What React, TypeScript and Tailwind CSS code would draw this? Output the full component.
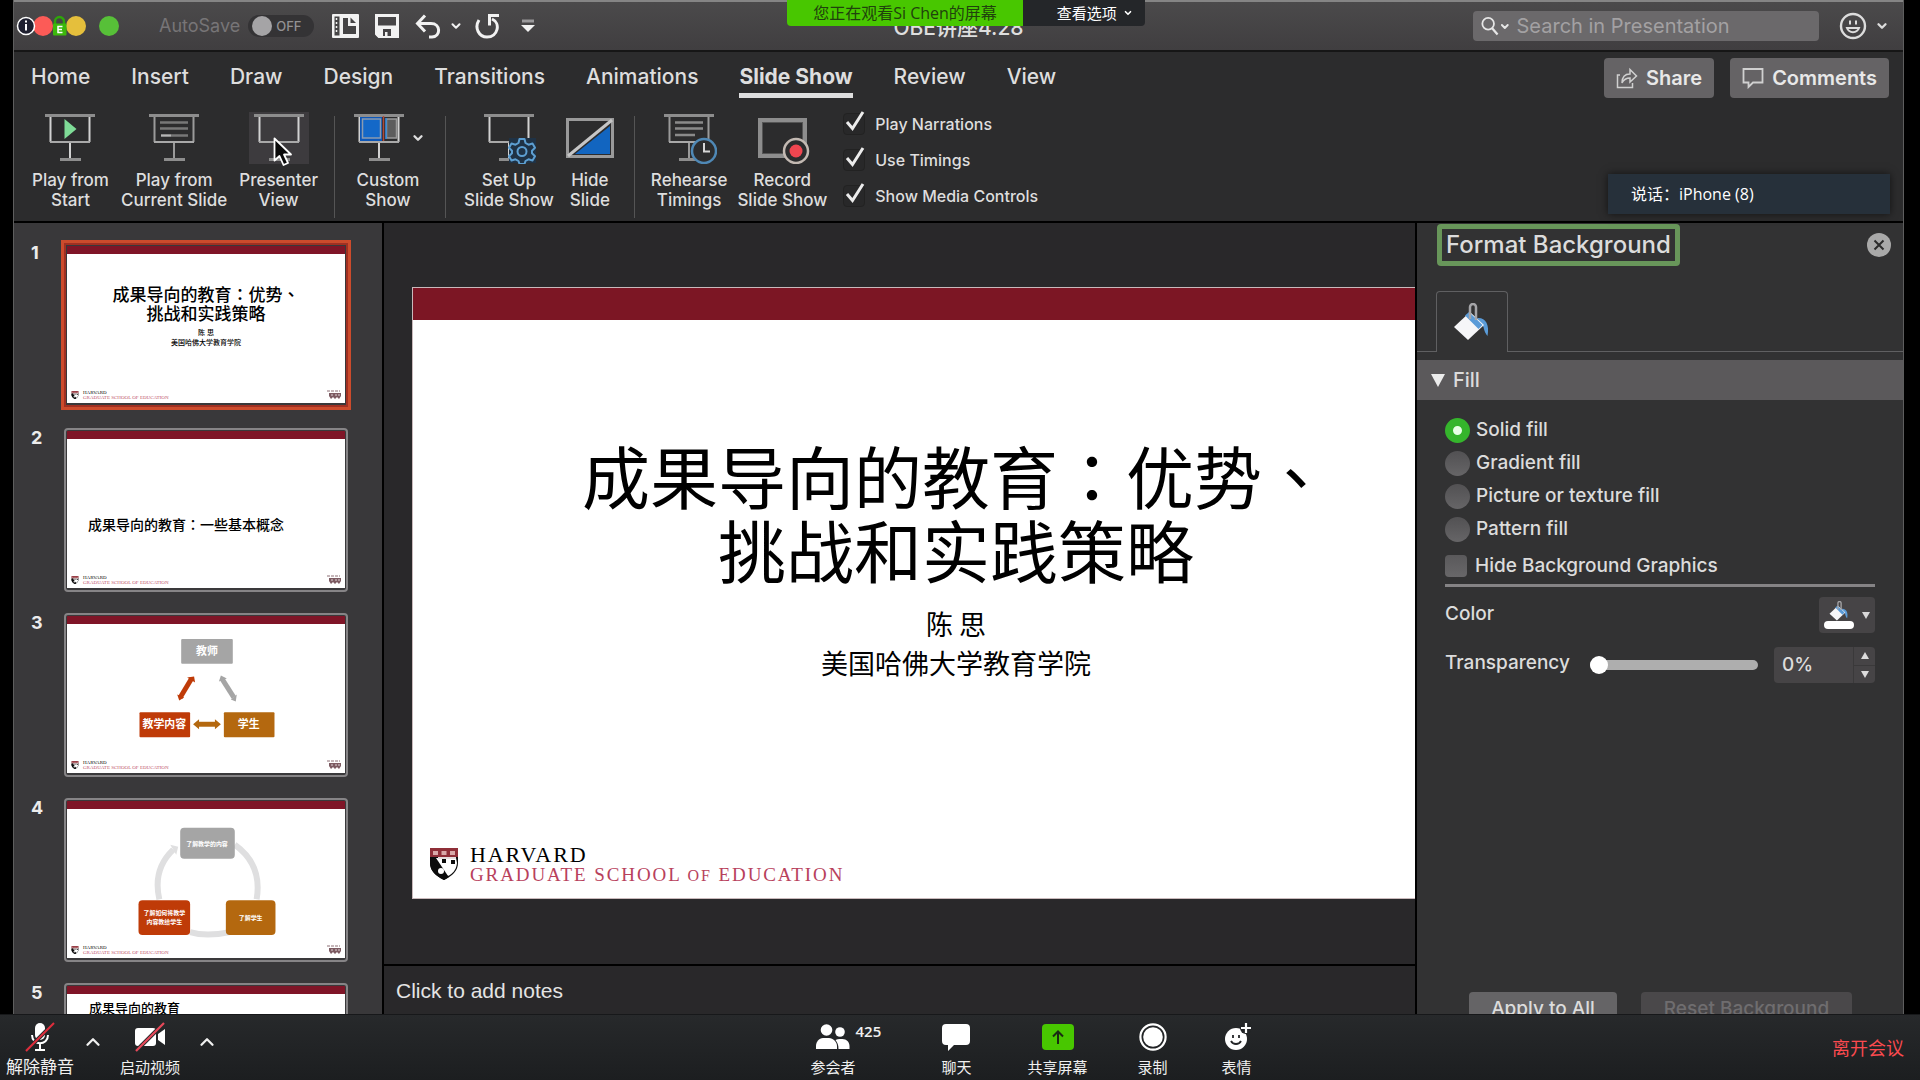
import { useState, type ReactNode } from "react";
import { ChevronDown, ChevronUp } from "lucide-react";
import { clsx } from "clsx";

const ribbonTabs = [
  "Home",
  "Insert",
  "Draw",
  "Design",
  "Transitions",
  "Animations",
  "Slide Show",
  "Review",
  "View",
];

const fillOptions = [
  "Solid fill",
  "Gradient fill",
  "Picture or texture fill",
  "Pattern fill",
];

const playbackOptions = ["Play Narrations", "Use Timings", "Show Media Controls"];

/* ---------- icons ---------- */

function Screen({ children, bright = true }: { children?: ReactNode; bright?: boolean }) {
  const line = bright ? "#d2d2d2" : "#9a9a9a";
  return (
    <svg width="56" height="52" viewBox="0 0 56 52" fill="none" aria-hidden="true">
      <path d="M8.5 4v26M47.5 4v26M28 30v17" stroke={line} strokeWidth="2" />
      <path d="M8 30h40" stroke="#a9a9a9" strokeWidth="2" />
      <path d="M3 3.5h50M18 47.5h21" stroke="#8d8d8d" strokeWidth="3" />
      {children}
    </svg>
  );
}

const PlayStartIcon = () => (
  <Screen>
    <path d="M22.5 7v20l12-10z" fill="#7fdc97" />
  </Screen>
);

const PlayCurrentIcon = () => (
  <Screen bright={false}>
    <path d="M14 10.5h28M14 16.5h28M25 23.5h17" stroke="#777" strokeWidth="2.4" />
    <path d="M15 23.5h10" stroke="#b5b5b5" strokeWidth="2.4" />
  </Screen>
);

const CustomShowIcon = () => (
  <Screen>
    <rect x="9" y="5" width="22" height="24" fill="#0d57b8" />
    <rect x="11.5" y="7" width="18" height="19" fill="#1468c8" stroke="#8a9bb0" strokeWidth="1.5" />
    <path d="M32.5 4v25" stroke="#b04a3c" strokeWidth="1.5" />
    <rect x="35.5" y="7" width="10" height="19" fill="#5d5d5d" stroke="#9a9a9a" strokeWidth="1.5" />
    <path d="M35 6v21" stroke="#2f8ae0" strokeWidth="1.5" />
  </Screen>
);

const SetUpIcon = () => (
  <Screen>
    <path d="M28 26h27v25H28z" fill="#1f3245" />
    <g stroke="#5d9fd2" strokeWidth="2">
      <path
        d="M38.5 27h5l1 4 3 1.7 4-1.2 2.5 4.3-3 2.9v2.6l3 2.9-2.5 4.3-4-1.2-3 1.7-1 3h-5l-1-3-3-1.7-4 1.2-2.5-4.3 3-2.9v-2.6l-3-2.9 2.5-4.3 4 1.2 3-1.7z"
        fill="#1f3245"
        strokeLinejoin="round"
      />
      <circle cx="41" cy="39.5" r="4.5" />
    </g>
  </Screen>
);

const HideSlideIcon = () => (
  <svg width="56" height="52" viewBox="0 0 56 52" fill="none" aria-hidden="true">
    <rect x="5.5" y="7.5" width="45" height="37" stroke="#9a9a9a" strokeWidth="3" />
    <path d="M48 14v28H13z" fill="#1265c0" />
    <path d="M6 44L50 8" stroke="#c6c6c6" strokeWidth="3" />
  </svg>
);

const RehearseIcon = () => (
  <Screen bright={false}>
    <path d="M14 10.5h28M14 16.5h28M14 23h20" stroke="#8a8a8a" strokeWidth="2.4" />
    <circle cx="43" cy="39" r="12" fill="#2c2c2d" stroke="#4f88b5" strokeWidth="2.5" />
    <path d="M43 31v8.5h6" stroke="#d6d6d6" strokeWidth="2" />
  </Screen>
);

const RecordIcon = () => (
  <svg width="56" height="52" viewBox="0 0 56 52" fill="none" aria-hidden="true">
    <rect x="6" y="8" width="45" height="36" stroke="#8d8d8d" strokeWidth="4" />
    <rect x="8.5" y="10.5" width="40" height="31" stroke="#555" strokeWidth="1" />
    <circle cx="42" cy="39" r="12" fill="#2c2c2d" stroke="#c3b9b2" strokeWidth="2.5" />
    <circle cx="42" cy="39" r="6.5" fill="#f04650" />
  </svg>
);

const PointerIcon = ({ className }: { className?: string }) => (
  <svg width="20" height="30" viewBox="0 0 20 30" className={className} aria-hidden="true">
    <path
      d="M1.5 1.5v22l5-4.5 4 9 4.5-2-4-8.5h7z"
      fill="#0a0a0a"
      stroke="#fff"
      strokeWidth="1.8"
      strokeLinejoin="round"
    />
  </svg>
);

const BucketIcon = ({ size = 38 }: { size?: number }) => (
  <svg width={size} height={size} viewBox="0 0 38 38" fill="none" aria-hidden="true">
    <path d="M24 15c8-1 13 6 10.5 18-1.5-2-3-4-4-9z" fill="#5a9bd8" />
    <path d="M17 9L31 22 15 37 1 24z" fill="#f6f6f8" />
    <path d="M12 12.5l4-3.5 13.5 13-4 4z" fill="#5a9bd8" />
    <path d="M17 16V4a3 3 0 0 1 6 0v13" stroke="#a5a5a8" strokeWidth="2.5" />
  </svg>
);

const ShieldIcon = ({ className }: { className?: string }) => (
  <svg viewBox="0 0 28 32" className={className} aria-hidden="true">
    <path d="M0 9h28v6c0 8-6 13-14 17C6 28 0 23 0 15z" fill="#0c0c0c" />
    <path d="M6 10h20l1 5c-1 8-5 11-9 13z" fill="#fff" />
    <path d="M0 12l19 17-5 3C6 28 0 23 0 15z" fill="#0c0c0c" />
    <circle cx="11" cy="23" r="3" fill="#fff" />
    <path d="M12 11h4v4h-4zM21 12h4v4h-4z" fill="#0c0c0c" />
    <path d="M0 0h28v9H0z" fill="#8f2f38" />
    <path d="M3 3h5v4H3zM11.5 3h5v4h-5zM20 3h5v4h-5z" fill="#d9a8a8" />
    <path d="M8 9h18v2H8z" fill="#e5dede" />
  </svg>
);

const CrestMark = () => (
  <svg width="14" height="10" viewBox="0 0 14 10" aria-hidden="true">
    <path d="M0 1h13" stroke="#8c6f75" strokeWidth="1" strokeDasharray="3 1" />
    <path d="M2 3h12v3l-2 3-2-2-2 2-2-2-2 2-2-3z" fill="#7d5b62" />
    <path d="M5 4v2M9 4v2M12 4v2" stroke="#e0d4d6" strokeWidth="1" />
  </svg>
);

/* ---------- slides ---------- */

const Punct = ({ children }: { children: string }) => (
  <span className="font-['Noto_Sans_CJK_TC',sans-serif]">{children}</span>
);

function Thumbnail({
  number,
  selected,
  children,
}: {
  number: number;
  selected?: boolean;
  children: ReactNode;
}) {
  return (
    <li className="flex items-start">
      <span className="w-[50px] shrink-0 pl-[17px] text-lg leading-5 font-bold text-[#ececec]">
        {number}
      </span>
      <button
        type="button"
        aria-label={`Slide ${number}`}
        className={clsx(
          "flex h-[164px] w-[284px] shrink-0 border-2 px-px pt-px pb-0.5",
          selected
            ? "border-[#a03022] outline-3 outline-[#cc4b2c]"
            : "rounded-sm border-[#868486] bg-[#3a393b]",
        )}
      >
        <span className="flex h-full w-full flex-col border-t-8 border-[#7f1527] bg-white text-black">
          <span className="flex min-h-0 flex-1 flex-col">{children}</span>
          <span className="flex h-4 shrink-0 items-center gap-1 px-1">
            <ShieldIcon className="h-2 w-2" />
            <span className="flex flex-1 flex-col text-left font-['Liberation_Serif',serif] text-[5px] leading-[5px]">
              <span>HARVARD</span>
              <span className="text-[#c0526a]">GRADUATE SCHOOL OF EDUCATION</span>
            </span>
            <CrestMark />
          </span>
        </span>
      </button>
    </li>
  );
}

function SlideList() {
  return (
    <aside
      aria-label="Slides"
      className="w-[370px] shrink-0 overflow-hidden border-r-2 border-black bg-[#39383a] pt-5"
    >
      <ol className="flex flex-col gap-[21px]">
        <Thumbnail number={1} selected>
          <span className="flex flex-col pt-[30px] text-center">
            <span className="text-[17px] leading-[19px] font-medium">
              成果导向的教育<Punct>：</Punct>优势<Punct>、</Punct>
              <br />
              挑战和实践策略
            </span>
            <span className="pt-1 text-[7px] leading-[10px] font-medium">
              陈 思
              <br />
              美国哈佛大学教育学院
            </span>
          </span>
        </Thumbnail>
        <Thumbnail number={2}>
          <span className="pt-[75px] pl-[21px] text-left text-sm leading-5 font-medium">
            成果导向的教育<Punct>：</Punct>一些基本概念
          </span>
        </Thumbnail>
        <Thumbnail number={3}>
          <svg viewBox="0 0 278 134" className="w-full font-['Noto_Sans_CJK_SC',sans-serif]">
            <g fontSize="11" fontWeight="700" fill="#fff" textAnchor="middle">
              <rect x="114" y="15" width="52" height="25" rx="1" fill="#a5a5a5" />
              <text x="140" y="31">教师</text>
              <rect x="72" y="89" width="51" height="25" rx="1" fill="#bf3b08" />
              <text x="97" y="105">教学内容</text>
              <rect x="157" y="89" width="51" height="25" rx="1" fill="#b4680f" />
              <text x="182" y="105">学生</text>
            </g>
            <path d="M124.5 55L113 74" stroke="#bf3b08" strokeWidth="5" />
            <path d="M120 54l7-1 1 6zM110 71l2 6 5-3z" fill="#bf3b08" />
            <path d="M155 55l12 19" stroke="#a5a5a5" strokeWidth="5" />
            <path d="M152 58l2-6 6 3zM164 76l6-5-1 7z" fill="#a5a5a5" />
            <path d="M130 101h19" stroke="#b4680f" strokeWidth="5" />
            <path d="M132 96v10l-6-5zM148 96v10l6-5z" fill="#b4680f" />
          </svg>
        </Thumbnail>
        <Thumbnail number={4}>
          <svg viewBox="0 0 278 134" className="w-full font-['Noto_Sans_CJK_SC',sans-serif]">
            <g stroke="#dfdfe0" strokeWidth="6" fill="none">
              <path d="M168 36q28 20 22 55M92 91q-7-30 14-50M123 124q16 5 40 0" />
            </g>
            <path d="M103 36l8 2-2 8z" fill="#dfdfe0" />
            <g fontSize="6" fontWeight="700" fill="#fff" textAnchor="middle">
              <rect x="113" y="19" width="55" height="31" rx="4" fill="#a5a5a5" />
              <text x="140" y="37">了解教学的内容</text>
              <rect x="71" y="92" width="52" height="35" rx="4" fill="#bf3b08" />
              <text x="97" y="107">了解如何将教学</text>
              <text x="97" y="116">内容教给学生</text>
              <rect x="159" y="92" width="50" height="35" rx="4" fill="#b4680f" />
              <text x="184" y="112">了解学生</text>
            </g>
          </svg>
        </Thumbnail>
        <Thumbnail number={5}>
          <span className="pt-1 pl-[22px] text-left text-[13px] leading-5 font-medium">
            成果导向的教育
          </span>
        </Thumbnail>
      </ol>
    </aside>
  );
}

function SlideStage() {
  return (
    <main className="flex min-w-0 flex-1 flex-col bg-[#29282a]">
      <div className="min-h-0 flex-1 overflow-hidden pt-16 pl-7">
        <article className="flex aspect-video w-[1088px] flex-col border border-[#c9b9bb] bg-white font-['Noto_Sans_CJK_SC',sans-serif] text-black">
          <div className="h-8 shrink-0 bg-[#7c1624]" />
          <div className="flex-1 pt-[118px] text-center">
            <h1 className="text-[68px] leading-[74px]">
              成果导向的教育<Punct>：</Punct>优势<Punct>、</Punct>
              <br />
              挑战和实践策略
            </h1>
            <p className="pt-[18px] text-[27px] leading-[39px]">
              陈 思
              <br />
              美国哈佛大学教育学院
            </p>
          </div>
          <footer className="flex items-center gap-3 pb-3 pl-[17px]">
            <ShieldIcon className="h-8 w-7" />
            <div className="pt-1 font-['Liberation_Serif',serif] text-[19px] leading-5 tracking-widest">
              <p className="text-[22px] leading-5">HARVARD</p>
              <p className="text-[#b8415c]">
                GRADUATE SCHOOL <span className="text-base leading-5">OF</span> EDUCATION
              </p>
            </div>
          </footer>
        </article>
      </div>
      <button
        type="button"
        className="flex h-[50px] shrink-0 items-center border-t-2 border-black px-3 pt-0.5 font-['Liberation_Sans',sans-serif] text-[21px] text-[#e4e4e4]"
      >
        Click to add notes
      </button>
    </main>
  );
}

/* ---------- chrome ---------- */

function TitleBar() {
  return (
    <header className="relative flex h-[52px] shrink-0 items-center border-t-2 border-b-2 border-t-[#858585] border-b-[#161616] bg-linear-to-b from-[#4b4a4b] to-[#403e40] pr-3.5">
      <svg width="108" height="26" viewBox="0 0 108 26" aria-hidden="true">
        <circle cx="29" cy="13" r="10" fill="#fc5b57" />
        <circle cx="62" cy="13" r="10" fill="#e5bf3c" />
        <circle cx="95" cy="13" r="10" fill="#57c038" />
        <circle cx="12" cy="13" r="8.5" fill="#1f2030" stroke="#fff" strokeWidth="1.5" />
        <path d="M12 11v6.5M12 7.5v2" stroke="#fff" strokeWidth="2" />
        <path d="M41 12V8.5a4.5 4.5 0 0 1 9 0V12" stroke="#2fa50a" strokeWidth="2.5" fill="none" />
        <rect x="39" y="10.5" width="13.5" height="12" rx="1" fill="#3cb80c" />
        <path d="M48.5 13.5h-4.5v6h4.5M44 16.5h4" stroke="#fff" strokeWidth="1.5" fill="none" />
      </svg>
      <label className="ml-[37px] flex items-center gap-2 text-lg text-[#777577]">
        AutoSave
        <span className="flex h-[22px] w-[66px] items-center gap-1 rounded-full bg-[#343335] pl-1">
          <input
            type="checkbox"
            aria-label="AutoSave"
            className="size-5 appearance-none rounded-full bg-[#a5a4a6]"
          />
          <span className="text-[13px] font-medium text-[#929193]">OFF</span>
        </span>
      </label>
      <div className="ml-[18px] flex items-center text-[#f2f2f2]">
        <button type="button" aria-label="Layout" className="mr-4">
          <svg width="27" height="24" viewBox="0 0 27 24">
            <rect width="27" height="24" rx="1" fill="currentColor" />
            <path d="M2.5 2.5h5v19h-5z" fill="#454445" />
            <path d="M4.500 4v15" stroke="currentColor" strokeWidth="1.500" strokeDasharray="2 2" />
            <path d="M11 4h5v8h8v8H11z" fill="#454445" />
            <path d="M18.500 3.500l5.500 5.500h-5.500z" fill="#454445" />
          </svg>
        </button>
        <button type="button" aria-label="Save" className="mr-4">
          <svg width="24" height="24" viewBox="0 0 24 24" fill="none" stroke="currentColor">
            <path d="M1.5 1.5h21v21H4l-2.5-2.5z" strokeWidth="3" />
            <path d="M2 12h20v10H2z" fill="currentColor" />
            <path d="M8 15h8v7H8z" fill="#444244" stroke="none" />
            <path d="M10 18h2.5v4H10z" fill="currentColor" stroke="none" />
          </svg>
        </button>
        <button type="button" aria-label="Undo" className="mr-2">
          <svg width="26" height="25" viewBox="0 0 26 25" fill="none" stroke="currentColor" strokeWidth="3">
            <path d="M10 1.5L2.5 9.5l7.5 8" />
            <path d="M3 9.5h13c10 0 10 13 1 13.5h-3" />
          </svg>
        </button>
        <button type="button" aria-label="Undo history" className="mr-3">
          <ChevronDown size={14} strokeWidth={3.5} />
        </button>
        <button type="button" aria-label="Repeat" className="mr-5">
          <svg width="26" height="26" viewBox="0 0 26 26" fill="none" stroke="currentColor" strokeWidth="3">
            <path d="M4 7c-5 8 0 17 8 17 11 0 14-14 5-18" />
            <path d="M24 2.5h-9.5v10" />
          </svg>
        </button>
        <button type="button" aria-label="Customize toolbar">
          <svg width="14" height="14" viewBox="0 0 14 14">
            <path d="M1 2h12" stroke="#9a999b" strokeWidth="3" />
            <path d="M0 6h14l-7 7z" fill="currentColor" />
          </svg>
        </button>
      </div>
      <h2 className="absolute top-2.5 left-1/2 -translate-x-1/2 text-[21px] leading-8 font-medium text-[#dedede]">
        OBE讲座4.28
      </h2>
      <div className="ml-auto flex items-center">
        <label className="flex h-[30px] w-[346px] items-center rounded bg-[#6b696b] pl-2 text-[#e6e6e6]">
          <svg width="20" height="22" viewBox="0 0 20 22" fill="none" stroke="currentColor" aria-hidden="true">
            <circle cx="8" cy="8.5" r="6.5" strokeWidth="2" />
            <path d="M12.5 13.5l6 7" strokeWidth="2.5" />
          </svg>
          <ChevronDown size={13} strokeWidth={4} />
          <input
            type="search"
            aria-label="Search in Presentation"
            placeholder="Search in Presentation"
            className="ml-1.5 w-full bg-transparent text-xl outline-none placeholder:text-[#a3a1a3]"
          />
        </label>
        <button type="button" aria-label="Feedback" className="ml-5 flex items-center gap-2 text-[#dcdcdc]">
          <svg width="28" height="28" viewBox="0 0 28 28" fill="none" stroke="currentColor">
            <circle cx="14" cy="14" r="12" strokeWidth="2.4" />
            <path d="M11 8.5v4M17 8.5v4M8 16c2 5.5 10 5.5 12 0z" strokeWidth="2" />
          </svg>
          <ChevronDown size={14} strokeWidth={4} />
        </button>
      </div>
    </header>
  );
}

function RibbonButton({
  icon,
  lines,
  children,
}: {
  icon: ReactNode;
  lines: [string, string];
  children?: ReactNode;
}) {
  return (
    <button
      type="button"
      className="flex flex-col items-center gap-1.5 text-[17px] leading-5 font-medium"
    >
      <span className="relative flex items-center">
        {icon}
        {children}
      </span>
      <span>
        {lines[0]}
        <br />
        {lines[1]}
      </span>
    </button>
  );
}

const Divider = () => <span className="mt-1 h-[102px] w-px self-start bg-[#555]" />;

function CheckOption({ label }: { label: string }) {
  const [checked, setChecked] = useState(true);
  return (
    <label className="flex h-9 items-center gap-2.5 text-base font-medium">
      <span className="relative">
        <input
          type="checkbox"
          checked={checked}
          onChange={() => setChecked(!checked)}
          className="block size-[22px] appearance-none rounded border border-[#222] bg-[#282829]"
        />
        {checked && (
          <svg
            width="22"
            height="24"
            viewBox="0 0 22 24"
            className="pointer-events-none absolute -top-1 left-0"
            aria-hidden="true"
          >
            <path d="M4 13l5.5 6.5L20 3" stroke="#ececec" strokeWidth="3" fill="none" />
          </svg>
        )}
      </span>
      {label}
    </label>
  );
}

function Ribbon() {
  const [active, setActive] = useState("Slide Show");
  return (
    <section className="shrink-0 border-b-2 border-black bg-[#2c2c2d] text-[#dedede]">
      <div className="flex h-[50px] items-center pr-3.5 pl-[17px]">
        <nav className="flex h-full items-center gap-[41px] text-[21px] font-medium">
          {ribbonTabs.map((tab) => (
            <button
              key={tab}
              type="button"
              onClick={() => setActive(tab)}
              className={clsx(
                "border-y-[5px] border-t-transparent leading-8",
                active === tab ? "border-b-[#dedede] font-bold" : "border-b-transparent",
              )}
            >
              {tab}
            </button>
          ))}
        </nav>
        <div className="mt-0.5 ml-auto flex gap-4 text-xl font-semibold text-[#e8e8e8]">
          <button type="button" className="flex h-10 items-center gap-2 rounded bg-[#656365] px-3">
            <svg width="22" height="22" viewBox="0 0 22 22" fill="none" stroke="#d0d0d0" strokeWidth="1.5">
              <path d="M4 8H1.5v12.5h15V16" />
              <path d="M6 16c0-6 3-9 8-9V2.5l6.5 6.5L14 15v-4c-4 0-6 1-8 5z" />
            </svg>
            Share
          </button>
          <button type="button" className="flex h-10 items-center gap-2 rounded bg-[#656365] px-3">
            <svg width="22" height="22" viewBox="0 0 22 22" fill="none" stroke="#d0d0d0" strokeWidth="1.8">
              <path d="M1.5 2h19v13.5H11L6.5 20v-4.5h-5z" />
            </svg>
            Comments
          </button>
        </div>
      </div>
      <div className="flex h-[119px] items-start pt-2.5 pl-[18px]">
        <div className="flex gap-3 pr-4">
          <RibbonButton icon={<PlayStartIcon />} lines={["Play from", "Start"]} />
          <RibbonButton icon={<PlayCurrentIcon />} lines={["Play from", "Current Slide"]} />
          <RibbonButton
            icon={
              <span className="bg-[#3d3b3e] px-0.5">
                <Screen />
              </span>
            }
            lines={["Presenter", "View"]}
          >
            <PointerIcon className="absolute top-[25px] left-6" />
          </RibbonButton>
        </div>
        <Divider />
        <div className="flex pr-5 pl-4">
          <RibbonButton icon={<CustomShowIcon />} lines={["Custom", "Show"]}>
            <ChevronDown size={14} strokeWidth={4} className="ml-1" />
          </RibbonButton>
        </div>
        <Divider />
        <div className="flex gap-2 pr-4 pl-[18px]">
          <RibbonButton icon={<SetUpIcon />} lines={["Set Up", "Slide Show"]} />
          <RibbonButton icon={<HideSlideIcon />} lines={["Hide", "Slide"]} />
        </div>
        <Divider />
        <div className="flex gap-2.5 px-4">
          <RibbonButton icon={<RehearseIcon />} lines={["Rehearse", "Timings"]} />
          <RibbonButton icon={<RecordIcon />} lines={["Record", "Slide Show"]} />
        </div>
        <div className="-mt-1.5 flex flex-col">
          {playbackOptions.map((label) => (
            <CheckOption key={label} label={label} />
          ))}
        </div>
      </div>
    </section>
  );
}

function FormatPane() {
  const [fill, setFill] = useState(fillOptions[0]);
  return (
    <aside
      aria-label="Format Background"
      className="flex w-[488px] shrink-0 flex-col border-l-2 border-black bg-[#323233] text-[19px] font-medium text-[#dcdcdc]"
    >
      <div className="flex items-center justify-between pt-px pr-3 pl-5">
        <h2 className="rounded border-[5px] border-[#68965a] px-1 text-2xl leading-8 font-medium">
          Format Background
        </h2>
        <button type="button" aria-label="Close pane">
          <svg width="24" height="24" viewBox="0 0 24 24">
            <circle cx="12" cy="12" r="12" fill="#a9a9a9" />
            <path d="M7.5 7.5l9 9M16.5 7.5l-9 9" stroke="#2c2c2c" strokeWidth="2" />
          </svg>
        </button>
      </div>
      <div className="mt-[25px] flex border-b border-[#606062] pl-[19px]">
        <button
          type="button"
          aria-label="Fill options"
          className="-mb-px flex h-[61px] w-[72px] items-center justify-center rounded-t border border-b-0 border-[#606062] bg-[#323233]"
        >
          <BucketIcon />
        </button>
      </div>
      <button
        type="button"
        className="mt-2 flex h-10 shrink-0 items-center gap-2 bg-[#5b595b] pl-3.5 text-xl"
      >
        <svg width="14" height="13" viewBox="0 0 14 13" aria-hidden="true">
          <path d="M0 0h14L7 13z" fill="#ececec" />
        </svg>
        Fill
      </button>
      <div className="flex flex-1 flex-col px-7 pt-3.5">
        {fillOptions.map((option) => (
          <label key={option} className="flex h-[33px] items-center gap-1.5">
            <input
              type="radio"
              name="fill"
              checked={fill === option}
              onChange={() => setFill(option)}
              className="size-[25px] appearance-none rounded-full bg-linear-to-b from-[#525153] to-[#666567] checked:border-8 checked:border-[#35b52c] checked:bg-[#e8ffe6] checked:bg-none"
            />
            {option}
          </label>
        ))}
        <label className="mt-1 flex h-8 items-center gap-2">
          <input
            type="checkbox"
            className="size-[22px] appearance-none rounded-sm bg-linear-to-b from-[#5a595b] to-[#686769]"
          />
          Hide Background Graphics
        </label>
        <hr className="mt-0.5 border-t-[3px] border-[#858385]" />
        <div className="mt-2.5 flex items-center justify-between">
          <span className="pb-0.5">Color</span>
          <button
            type="button"
            aria-label="Color"
            className="flex h-9 w-14 items-center justify-center gap-2 rounded-sm bg-[#464446]"
          >
            <span className="flex flex-col items-center">
              <BucketIcon size={20} />
              <span className="h-2 w-[30px] rounded-sm bg-white" />
            </span>
            <svg width="8" height="7" viewBox="0 0 8 7" aria-hidden="true">
              <path d="M0 0h8L4 7z" fill="#d8d8d8" />
            </svg>
          </button>
        </div>
        <div className="mt-3.5 flex items-center">
          <label htmlFor="transparency" className="pb-1">
            Transparency
          </label>
          <input
            id="transparency"
            type="range"
            defaultValue={0}
            className="ml-auto h-[17px] w-[168px] appearance-none bg-transparent [&::-webkit-slider-runnable-track]:h-2.5 [&::-webkit-slider-runnable-track]:rounded-full [&::-webkit-slider-runnable-track]:bg-[#aeaeae] [&::-webkit-slider-thumb]:-mt-1 [&::-webkit-slider-thumb]:size-[18px] [&::-webkit-slider-thumb]:appearance-none [&::-webkit-slider-thumb]:rounded-full [&::-webkit-slider-thumb]:bg-white"
          />
          <div className="ml-4 flex h-9 w-[101px] rounded-sm bg-[#464446]">
            <input
              type="text"
              aria-label="Transparency value"
              defaultValue="0%"
              className="min-w-0 flex-1 bg-transparent pl-2 outline-none"
            />
            <span className="flex w-[22px] flex-col border-l border-[#3a393a]">
              <button
                type="button"
                aria-label="Increase"
                className="flex flex-1 items-center justify-center border-b border-[#3a393a]"
              >
                <svg width="8" height="7" viewBox="0 0 8 7">
                  <path d="M4 0l4 7H0z" fill="#dcdcdc" />
                </svg>
              </button>
              <button
                type="button"
                aria-label="Decrease"
                className="flex flex-1 items-center justify-center"
              >
                <svg width="8" height="7" viewBox="0 0 8 7">
                  <path d="M0 0h8L4 7z" fill="#dcdcdc" />
                </svg>
              </button>
            </span>
          </div>
        </div>
      </div>
      <div className="flex h-[22px] shrink-0 items-start gap-6 overflow-hidden pl-[52px]">
        <button type="button" className="h-[34px] w-[148px] shrink-0 rounded bg-[#656466]">
          Apply to All
        </button>
        <button
          type="button"
          disabled
          className="h-[34px] w-[211px] shrink-0 rounded bg-[#4a484a] text-[#6f6d6f]"
        >
          Reset Background
        </button>
      </div>
    </aside>
  );
}

/* ---------- meeting overlay ---------- */

function ShareBanner() {
  return (
    <div className="absolute top-0 left-[41%] flex h-[26px] overflow-hidden rounded-b font-['Open_Sans','Noto_Sans_CJK_SC',sans-serif] text-base leading-[26px]">
      <p className="bg-[#48c700] px-[26px] text-[#20420d]">您正在观看Si Chen的屏幕</p>
      <button
        type="button"
        className="flex items-center gap-1.5 bg-[#242629] pr-3 pl-[34px] text-[15px] text-white"
      >
        查看选项
        <ChevronDown size={10} strokeWidth={4} />
      </button>
    </div>
  );
}

function MeetingButton({ icon, label }: { icon: ReactNode; label: string }) {
  return (
    <button type="button" className="flex flex-col items-center gap-1 pt-0.5">
      <span className="flex h-8 items-center">{icon}</span>
      <span className="leading-5">{label}</span>
    </button>
  );
}

function MeetingBar() {
  return (
    <footer className="flex h-[66px] shrink-0 items-center justify-between border-t border-[#17181a] bg-linear-to-b from-[#27292b] to-[#1c1e20] pr-4 pl-1.5 font-['Open_Sans','Noto_Sans_CJK_SC',sans-serif] text-[15px] text-[#f0f0f0]">
      <div className="flex items-start">
        <div className="text-[17px]">
          <MeetingButton
            label="解除静音"
            icon={
              <svg width="30" height="30" viewBox="0 0 30 30" fill="none" aria-hidden="true">
                <rect x="10" y="1" width="10" height="17" rx="5" fill="#fff" />
                <path d="M7 13c0 11 16 11 16 0M15 21v6M10 28h10" stroke="#fff" strokeWidth="2" />
                <path d="M1 29L29 1" stroke="#27292b" strokeWidth="4" />
                <path d="M1 29L29 1" stroke="#e02d3c" strokeWidth="2" />
              </svg>
            }
          />
        </div>
        <button type="button" aria-label="音频选项" className="mt-3 ml-2">
          <ChevronUp size={22} strokeWidth={2.5} />
        </button>
        <div className="ml-4">
          <MeetingButton
            label="启动视频"
            icon={
              <svg width="32" height="30" viewBox="0 0 32 30" fill="none" aria-hidden="true">
                <rect x="1" y="6" width="21" height="18" rx="3" fill="#fff" />
                <path d="M24 12l7-5v16l-7-5z" fill="#fff" />
                <path d="M2 29L30 1" stroke="#27292b" strokeWidth="4" />
                <path d="M2 29L30 1" stroke="#e8485a" strokeWidth="2.2" />
              </svg>
            }
          />
        </div>
        <button type="button" aria-label="视频选项" className="mt-3 ml-4">
          <ChevronUp size={22} strokeWidth={2.5} />
        </button>
      </div>
      <div className="ml-3 flex">
        <div className="relative">
          <MeetingButton
            label="参会者"
            icon={
              <svg width="34" height="26" viewBox="0 0 34 26" fill="#fff" aria-hidden="true">
                <circle cx="10.5" cy="6" r="5.8" />
                <path d="M0 25v-3c0-4 3-8 7-8h6c4 0 8 4 8 8v3z" />
                <circle cx="24" cy="8" r="4.8" />
                <path d="M22.5 25c0-4-1-6.5-3-9q2-1 4-1h3c4 0 7 3 7 7v3z" />
              </svg>
            }
          />
          <span className="absolute top-0.5 left-full leading-5 font-semibold">425</span>
        </div>
        <div className="ml-[86px]">
          <MeetingButton
            label="聊天"
            icon={
              <svg width="28" height="28" viewBox="0 0 28 28" aria-hidden="true">
                <path
                  d="M4 1h20q4 0 4 4v13q0 4-4 4H12l-6 6v-6H4q-4 0-4-4V5q0-4 4-4z"
                  fill="#fff"
                />
              </svg>
            }
          />
        </div>
        <div className="ml-[56px]">
          <MeetingButton
            label="共享屏幕"
            icon={
              <svg width="32" height="26" viewBox="0 0 32 26" fill="none" aria-hidden="true">
                <rect width="32" height="26" rx="4" fill="#48c700" />
                <path d="M16 20V8M11 12.5L16 7.5l5 5" stroke="#1a2b12" strokeWidth="2" />
              </svg>
            }
          />
        </div>
        <div className="ml-[50px]">
          <MeetingButton
            label="录制"
            icon={
              <svg width="28" height="28" viewBox="0 0 28 28" aria-hidden="true">
                <circle cx="14" cy="14" r="12.6" fill="none" stroke="#fff" strokeWidth="2.2" />
                <circle cx="14" cy="14" r="9.8" fill="#fff" />
              </svg>
            }
          />
        </div>
        <div className="ml-[54px]">
          <MeetingButton
            label="表情"
            icon={
              <svg width="28" height="28" viewBox="0 0 28 28" fill="none" aria-hidden="true">
                <circle cx="13" cy="16" r="11" fill="#fff" />
                <circle cx="23" cy="5" r="6" fill="#232527" />
                <path d="M23 0v10M18 5h10" stroke="#fff" strokeWidth="2.2" />
                <path d="M8 18c2 4 8 4 10 0M10 12v3M16 12v3" stroke="#232527" strokeWidth="1.8" />
              </svg>
            }
          />
        </div>
      </div>
      <button type="button" className="text-lg leading-5 text-[#fb4a4f]">
        离开会议
      </button>
    </footer>
  );
}

export default function App() {
  return (
    <div className="relative flex h-screen flex-col overflow-hidden bg-black font-['Inter','Noto_Sans_CJK_SC',sans-serif]">
      <div className="flex min-h-0 flex-1 flex-col pr-4 pl-[13px]">
        <div className="flex min-h-0 flex-1 flex-col border-x border-[#5e5e5e]">
          <TitleBar />
          <Ribbon />
          <div className="flex min-h-0 flex-1">
            <SlideList />
            <SlideStage />
            <FormatPane />
          </div>
        </div>
      </div>
      <MeetingBar />
      <ShareBanner />
      <p
        role="status"
        className="absolute top-[174px] right-[30px] h-10 w-[282px] bg-[#26303a] px-[23px] font-['Open_Sans','Noto_Sans_CJK_SC',sans-serif] text-base leading-10 text-white shadow-[0_0_8px_#00000099]"
      >
        说话：iPhone (8)
      </p>
    </div>
  );
}
